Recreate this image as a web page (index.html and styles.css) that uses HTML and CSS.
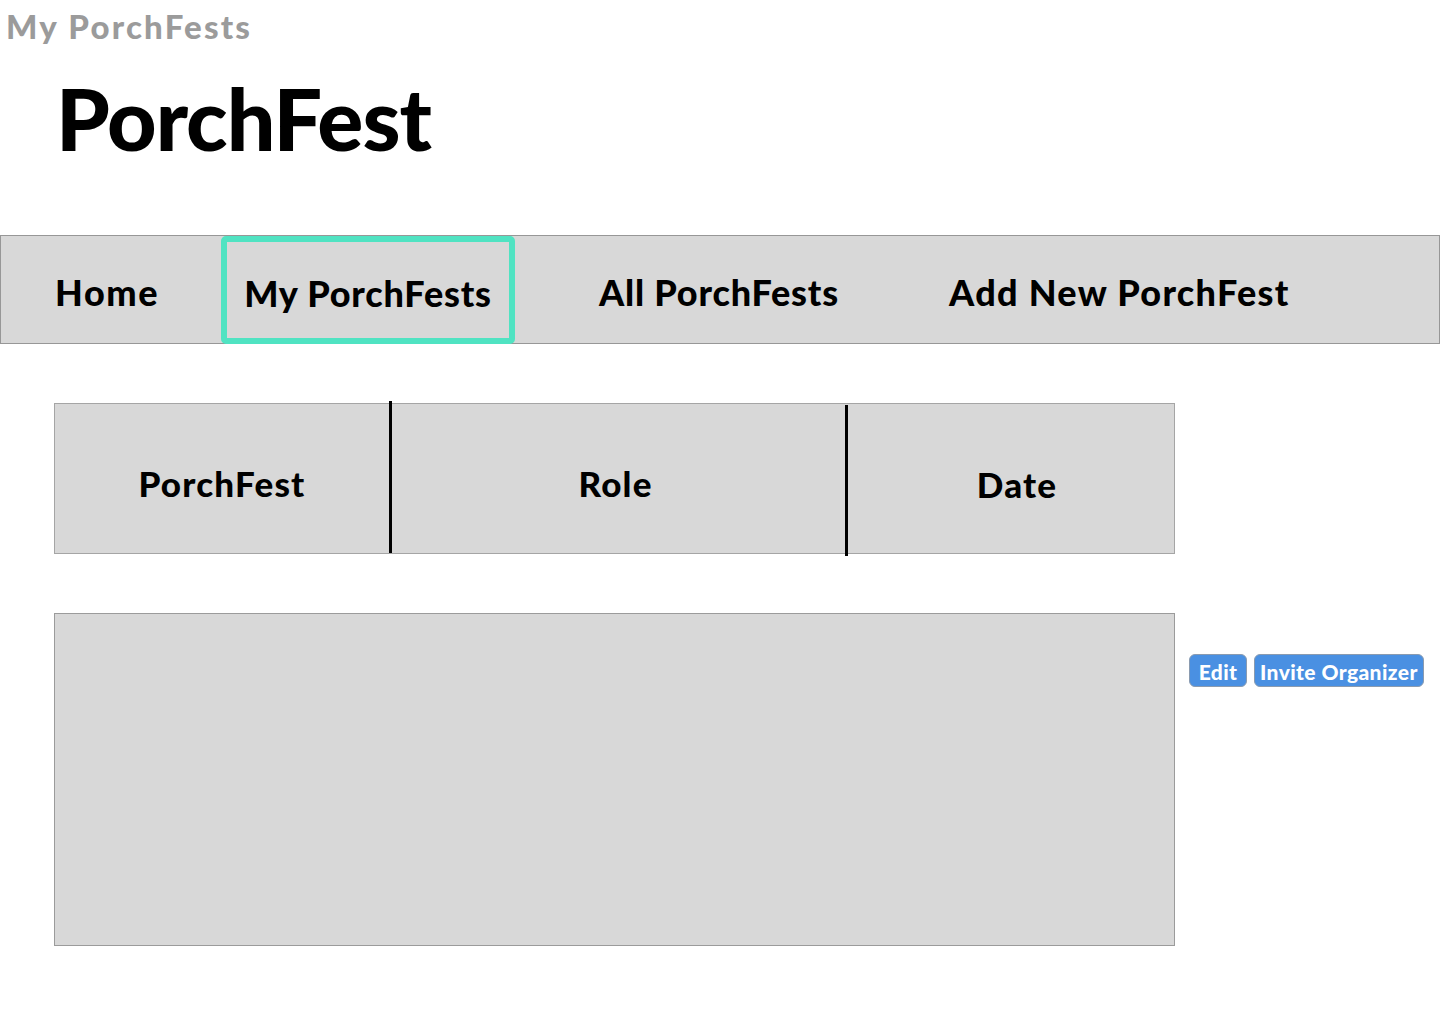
FILE: index.html
```html
<!DOCTYPE html>
<html lang="en">
<head>
  <meta charset="UTF-8">
  <title>My PorchFests</title>
  <link rel="stylesheet" href="styles.css">
</head>
<body>
  <div class="page-label">My PorchFests</div>
  <h1 class="title">PorchFest</h1>

  <nav class="nav">
    <a class="nav-item nav-home" href="#">Home</a>
    <a class="nav-item nav-mine active" href="#">My PorchFests</a>
    <a class="nav-item nav-all" href="#">All PorchFests</a>
    <a class="nav-item nav-add" href="#">Add New PorchFest</a>
  </nav>

  <div class="table-head">
    <div class="col col-name">PorchFest</div>
    <div class="col col-role">Role</div>
    <div class="col col-date">Date</div>
  </div>

  <div class="entry">
    <div class="entry-box"></div>
    <div class="actions">
      <button class="btn btn-edit">Edit</button>
      <button class="btn">Invite Organizer</button>
    </div>
  </div>
</body>
</html>
```

FILE: styles.css
```css
body {
  margin: 0;
  font-family: Lato, "Noto Sans", sans-serif;
  font-weight: 900;
  background: #fff;
  color: #000;
}
.page-label {
  color: #9b9b9b;
  font-size: 33px;
  padding: 6px 0 0 6px;
  line-height: 40px;
  letter-spacing: 2.2px;
}
.title {
  margin: 22px 0 0 56px;
  font-size: 86px;
  line-height: 100px;
  font-weight: 900;
  letter-spacing: -1px;
}
.nav {
  margin-top: 67px;
  height: 107px;
  background: #d8d8d8;
  border: 1px solid #979797;
  display: flex;
  align-items: stretch;
}
.nav-item {
  display: flex;
  align-items: center;
  color: #000;
  text-decoration: none;
  font-size: 36px;
  letter-spacing: 0.8px;
  padding-top: 5px;
  box-sizing: border-box;
}
.nav-home { margin-left: 54px; width: 166px; letter-spacing: 1.6px; }
.nav-mine {
  width: 294px;
  justify-content: center;
  margin-bottom: -1px;
}
.nav-mine.active {
  border: 6px solid #50e3c2;
  border-radius: 5px;
}
.nav-all { margin-left: 84px; width: 350px; }
.nav-add { letter-spacing: 1.3px; }
.table-head {
  margin: 59px 0 0 54px;
  width: 1119px;
  height: 149px;
  background: #d8d8d8;
  border: 1px solid #a5a5a5;
  display: grid;
  grid-template-columns: 334px 456px 1fr;
}
.col {
  display: flex;
  align-items: center;
  justify-content: center;
  font-size: 35px;
  letter-spacing: 1.2px;
  padding-top: 8px;
}
.col-role, .col-date {
  border-left: 3px solid #000;
}
.col-role { margin-top: -3px; padding-top: 11px; padding-right: 6px; }
.col-date { margin-top: 1px; margin-bottom: -3px; padding-top: 6px; padding-left: 12px; }
.entry {
  margin: 59px 0 0 54px;
  display: flex;
  align-items: flex-start;
  gap: 14px;
}
.entry-box {
  width: 1119px;
  height: 331px;
  background: #d8d8d8;
  border: 1px solid #9b9b9b;
}
.actions {
  margin-top: 41px;
  display: flex;
  gap: 7px;
}
.btn {
  font-family: Lato, "Noto Sans", sans-serif;
  font-weight: 900;
  font-size: 21px;
  letter-spacing: 0.4px;
  color: #fff;
  background: #4a90e2;
  border: 1px solid #8a9bb0;
  border-radius: 6px;
  height: 33px;
  padding: 2px 5px 0;
  line-height: 30px;
}
.btn-edit { min-width: 58px; }
```
